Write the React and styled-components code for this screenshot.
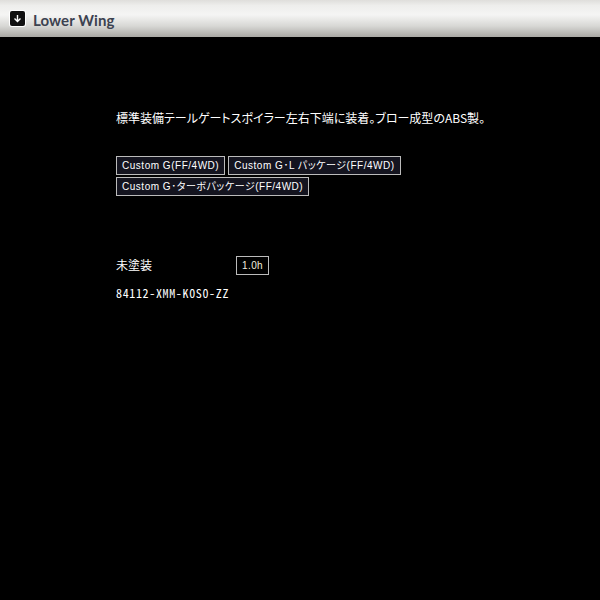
import React from 'react';
import styled, { createGlobalStyle } from 'styled-components';

const GlobalStyle = createGlobalStyle`
  html, body {
    margin: 0;
    padding: 0;
    background: #000;
  }
  body {
    font-family: "Liberation Sans", "Noto Sans CJK JP", sans-serif;
    color: #fff;
  }
`;

const Page = styled.div`
  width: 600px;
  height: 600px;
  background: #000;
  overflow: hidden;
`;

const Header = styled.header`
  height: 37px;
  display: flex;
  align-items: center;
  gap: 8px;
  padding: 0 0 0 10px;
  box-sizing: border-box;
  background: linear-gradient(to bottom, #dfdedb 0%, #eeeeec 15%, #f5f5f4 40%, #d8d8d5 70%, #a9a8a3 100%);
`;

const IconBox = styled.span`
  width: 15px;
  height: 15px;
  border-radius: 2px;
  background: #111;
  box-shadow: 0 0 0 1px #fff;
  display: flex;
  align-items: center;
  justify-content: center;
`;

const Title = styled.h1`
  margin: 2px 0 0;
  font-family: "Lato", sans-serif;
  font-size: 15px;
  line-height: 20px;
  font-weight: 700;
  letter-spacing: 0.1px;
  color: #3c4250;
`;

const Content = styled.main`
  padding: 72px 0 0 116px;
`;

const Description = styled.p`
  margin: 0;
  height: 18px;
  font-size: 12px;
  line-height: 18px;
  font-family: "Noto Sans CJK JP", sans-serif;
  font-feature-settings: "palt";
  white-space: nowrap;
`;

const Grades = styled.div`
  margin-top: 29px;
  width: 320px;
  display: flex;
  flex-wrap: wrap;
  gap: 2px 3px;
`;

const Grade = styled.span`
  height: 19px;
  box-sizing: border-box;
  padding: 0 5px;
  border: 1px solid #bbb;
  background: #14141f;
  font-size: 10px;
  line-height: 17px;
  font-family: "Liberation Sans", "Noto Sans CJK JP", sans-serif;
  font-feature-settings: "palt";
  letter-spacing: 0.52px;
  white-space: nowrap;
`;

const PaintRow = styled.div`
  margin-top: 60px;
  display: flex;
  align-items: center;
`;

const PaintLabel = styled.span`
  width: 120px;
  font-size: 12px;
  line-height: 14px;
  margin-bottom: 2px;
  font-family: "Noto Sans CJK JP", sans-serif;
`;

const Hours = styled.span`
  height: 19px;
  box-sizing: border-box;
  padding: 0 5px;
  border: 1px solid #bbb;
  font-size: 10px;
  line-height: 17px;
  letter-spacing: 0.4px;
  color: #f2ecdf;
`;

const PartNumber = styled.div`
  margin-top: 10px;
  font-family: "Noto Sans CJK JP", monospace;
  font-feature-settings: "hwid";
  font-size: 12px;
  line-height: 16px;
  letter-spacing: 0.65px;
`;

const grades = ['Custom G(FF/4WD)', 'Custom G･L パッケージ(FF/4WD)', 'Custom G･ターボパッケージ(FF/4WD)'];

export default function App() {
  return (
    <Page>
      <GlobalStyle />
      <Header>
        <IconBox>
          <svg width="9" height="9" viewBox="0 0 9 9" fill="none" stroke="#fff" strokeWidth="1.4">
            <path d="M4.5 1v6M1.5 4.5l3 3 3-3" />
          </svg>
        </IconBox>
        <Title>Lower Wing</Title>
      </Header>
      <Content>
        <Description>標準装備テールゲートスポイラー左右下端に装着。ブロー成型のABS製。</Description>
        <Grades>
          {grades.map((g) => (
            <Grade key={g}>{g}</Grade>
          ))}
        </Grades>
        <PaintRow>
          <PaintLabel>未塗装</PaintLabel>
          <Hours>1.0h</Hours>
        </PaintRow>
        <PartNumber>84112-XMM-K0S0-ZZ</PartNumber>
      </Content>
    </Page>
  );
}
